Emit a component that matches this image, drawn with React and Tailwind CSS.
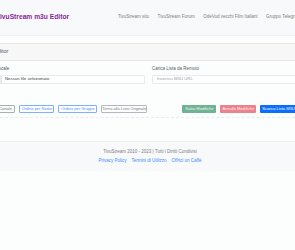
export default function App() {
  return (
    <div className="w-[295px] h-[250px] overflow-hidden bg-[#fcfdfd] text-[#3a3f44] font-['Liberation_Sans',Arial,sans-serif] leading-none">
      <nav className="h-[36px] bg-[#f8f9fa] border-b border-[#eef0f2] flex items-center whitespace-nowrap">
        <div className="w-[122px] -ml-[4px] shrink-0 text-[6.7px] font-bold text-[#8a1f9c]">TivuStream m3u Editor</div>
        <div className="flex gap-[8.5px] text-[4.5px] text-[#7a8086]">
          <span>TivuStream sito</span>
          <span>TivuStream Forum</span>
          <span>OdeVod vecchi Film Italiani</span>
          <span>Gruppo Telegram</span>
        </div>
      </nav>

      <div className="pt-[7px]">
        <div className="border-t border-[#e6e6e6]">
          <div className="h-[17px] bg-[#f7f7f7] border-b border-[#e6e6e6] flex items-center text-[5.5px] whitespace-nowrap text-[#555b60]">
            <span className="-ml-[6px]">Editor</span>
          </div>
          <div className="flex pt-[6px] whitespace-nowrap">
            <div className="-ml-[32px] w-[177px] shrink-0">
              <div className="text-[4.5px] h-[5px] mb-[3px] pl-[3px] text-[#555b60]">Carica Lista Locale</div>
              <div className="h-[9px] border border-[#e9ecef] rounded-[1px] bg-white flex items-center text-[4.3px]">
                <div className="w-[33px] h-full bg-[#e9ecef] border-r border-[#e2e5e8] flex items-center justify-center">Scegli file</div>
                <span className="pl-[3px]">Nessun file selezionato.</span>
              </div>
            </div>
            <div className="ml-[7px] w-[180px] shrink-0">
              <div className="text-[4.5px] h-[5px] mb-[3px] text-[#555b60]">Carica Lista da Remoto</div>
              <div className="h-[9px] border border-[#e9ecef] rounded-[1px] bg-white flex items-center text-[4.3px] text-[#9aa0a6] pl-[4px]">
                Inserisci M3U URL
              </div>
            </div>
          </div>

          <div className="mt-[21px] flex items-center whitespace-nowrap text-[4px]">
            <div className="flex gap-[4px]">
              <button className="-ml-[21px] h-[8px] px-[2.5px] border border-[#a9b3ae] text-[#6f7a74] rounded-[1px]">Aggiungi Canale</button>
              <button className="h-[8px] w-[35px] border border-[#7fb0fd] text-[#4d94fd] rounded-[1px]">Ordina per Nome</button>
              <button className="h-[8px] w-[39px] border border-[#7fb0fd] text-[#4d94fd] rounded-[1px]">Ordina per Gruppo</button>
              <button className="h-[8px] w-[46px] border border-[#b3b8bd] text-[#7a8086] rounded-[1px]">Torna alla Lista Originale</button>
            </div>
            <div className="ml-[35px] flex gap-[4px]">
              <button className="h-[8px] w-[34px] bg-[#6fb394] text-[#eef7f2] rounded-[1px]">Salva Modifiche</button>
              <button className="h-[8px] w-[36px] bg-[#ea838d] text-[#fdf0f1] rounded-[1px]">Annulla Modifiche</button>
              <button className="h-[8px] w-[36px] bg-[#0d6efd] text-white rounded-[1px]">Scarica Lista M3U</button>
            </div>
          </div>
          <div className="mt-[4px] border-t border-dashed border-[#e9ecef]"></div>
        </div>
      </div>

      <footer className="mt-[23px] h-[30px] bg-[#f8f9fa] border-t border-[#eef0f2] flex flex-col items-center justify-center gap-[4px] text-[4.5px] whitespace-nowrap">
        <div className="text-[#7a8086] pl-[5px]">TivuStream 2010 - 2023 | Tutti i Diritti Condivisi</div>
        <div className="flex gap-[5px] text-[#3d8bfd] pl-[5px]">
          <span>Privacy Policy</span>
          <span>Termini di Utilizzo</span>
          <span>Offrici un Caffè</span>
        </div>
      </footer>
    </div>
  );
}
